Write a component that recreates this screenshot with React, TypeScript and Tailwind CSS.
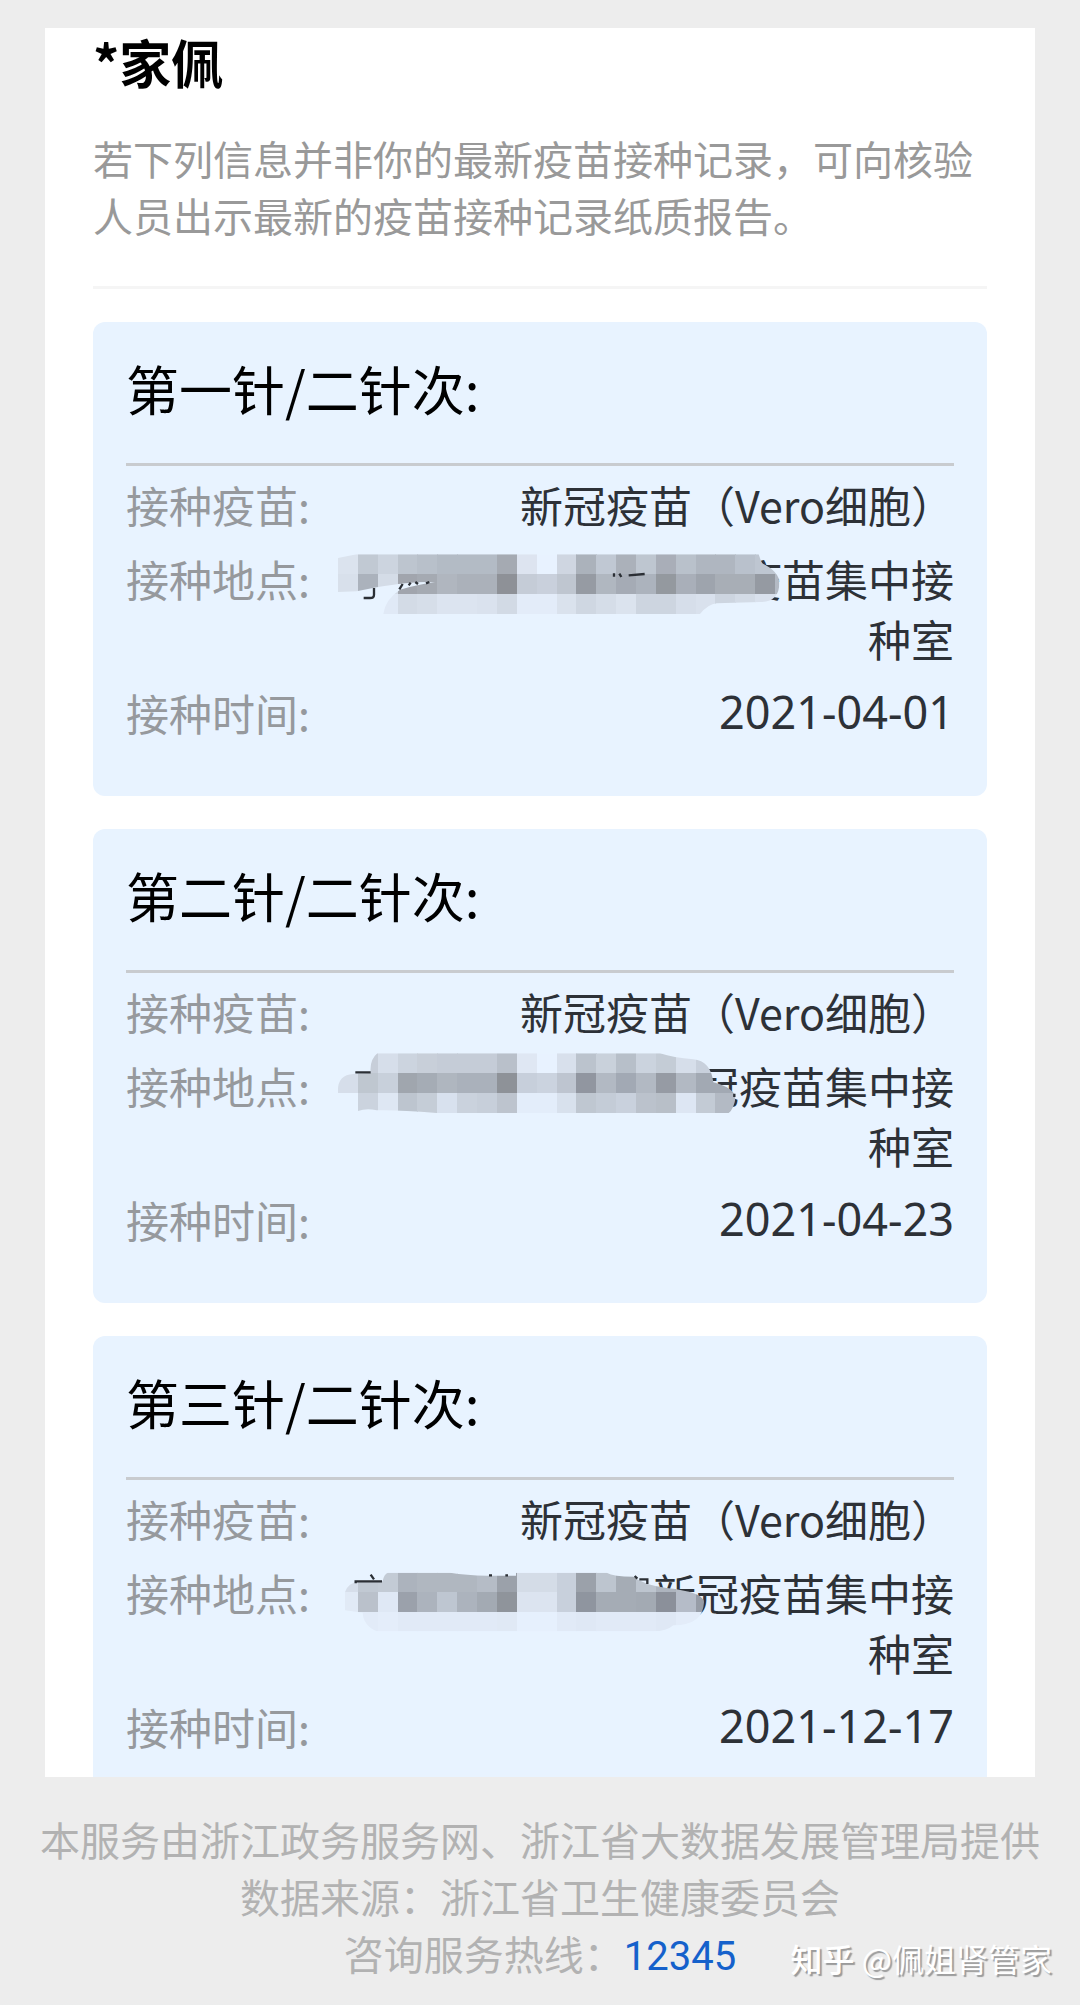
import React from 'react';

type Mosaic = {
  id: string;
  outline: string;
  rows: { y: number; cells: string[] }[];
  marks: string;
};

type Dose = {
  title: string;
  vaccine: string;
  place: string;
  date: string;
  mosaic: Mosaic;
};

const CELL = 59.6;

const firstMosaic: Mosaic = {
  id: 'mosaic-1',
  outline:
    'M54 90 L110 79 H1316 L1325 105 Q1378 130 1378 165 Q1378 222 1320 222 L1190 226 Q1165 228 1140 258 H190 Q195 215 240 185 Q300 168 345 163 Q290 158 170 178 L110 190 L54 192 Z',
  rows: [
    {
      y: 79,
      cells: ['#dbe3ee', '#c1c9d3', '#ccd4df', '#bdc5cf', '#b8c0ca', '#b3bbc5', '#b3bbc5', '#b3bbc5', '#a5aab2', '#dde4f0', '#e8f2ff', '#cfd6e1', '#abb2bb', '#c0c8d3', '#abb1ba', '#bec6d0', '#a9aeb8', '#b9c1cb', '#afb6c0', '#afb6c0', '#b9c1cc', '#bec6d1', '#bec6d1'],
    },
    {
      y: 139,
      cells: ['#d8e0eb', '#abb2bc', '#d4dce7', '#a1a5ad', '#a5aab2', '#b0b6bf', '#abb1ba', '#abb1ba', '#8e9197', '#c5ccd7', '#c9d0dc', '#bfc6d0', '#969ba3', '#b0b7c0', '#a5abb5', '#acb3bd', '#94999f', '#a9afb9', '#9ea4ad', '#a8aeb6', '#a8aeb6', '#959aa2', '#b3bac4'],
    },
    {
      y: 198,
      cells: ['#e5effc', '#e5effc', '#e0e9f6', '#d3dbe6', '#d6dee9', '#dce4f0', '#dce4f0', '#dae2ee', '#d2dae5', '#e3ecf9', '#e3ecf9', '#dae2ed', '#cfd7e2', '#d5dde8', '#dbe3ee', '#cdd5e0', '#cdd5e0', '#d6deea', '#d9e1ed', '#cdd5e0', '#d3dbe6', '#d9e1ed', '#d9e1ed'],
    },
  ],
  marks: 'M162 180 V200 Q162 210 150 210 H131 M238 184 L248 168 M266 172 L272 164 M286 162 L294 168 M318 166 L328 162 M882 136 V146 M898 137 L904 147 M926 142 L974 138',
};

const secondMosaic: Mosaic = {
  id: 'mosaic-2',
  outline:
    'M54 174 Q50 120 100 117 L152 114 Q148 75 172 55 H1020 Q1060 68 1120 73 Q1172 78 1180 142 Q1246 160 1246 190 Q1242 222 1226 234 H350 Q230 224 170 226 Q140 218 114 228 V174 Z',
  rows: [
    {
      y: 55,
      cells: ['#e5effc', '#c7ced9', '#d6deea', '#ccd4df', '#c8cfd9', '#c5ccd7', '#c5ccd7', '#c5ccd7', '#b9c0ca', '#dfe7f3', '#e8f2ff', '#d8e0ec', '#bbc3cd', '#c9d1db', '#b7bfc9', '#cbd3de', '#c4ccd6', '#d6deea', '#c8d0dc', '#c8d0dc', '#c8d0dc'],
    },
    {
      y: 114,
      cells: ['#d6deea', '#bfc7d0', '#c8d0db', '#a0a6ae', '#a5acb5', '#afb6bf', '#aab1bb', '#aab1bb', '#8e9298', '#c7cfdb', '#cbd3df', '#bec5d0', '#9196a0', '#b2b9c3', '#a2a9b4', '#b2b9c3', '#969ba4', '#b2b9c3', '#a2a9b3', '#a2a9b3', '#a9b0ba'],
    },
    {
      y: 174,
      cells: ['#e5effc', '#cbd3de', '#dee7f3', '#bdc5cf', '#c5cdd7', '#d8e1ee', '#cad2dd', '#c7cfda', '#bdc4ce', '#e3edfa', '#e3edfa', '#d8e1ed', '#bfc7d1', '#c4ccd7', '#c9d1dd', '#bbc2cc', '#b8bfc8', '#dde6f3', '#c3cbd5', '#b3bac4', '#b3bac4'],
    },
  ],
  marks: 'M106 112 H152 M1243 176 V186',
};

const thirdMosaic: Mosaic = {
  id: 'mosaic-3',
  outline:
    'M75 205 V150 Q85 122 115 120 L188 118 Q192 95 204 92 H390 Q440 100 500 101 H588 V92 H860 Q880 104 940 104 Q970 128 1040 138 Q1150 150 1152 180 Q1150 250 1060 250 Q1040 268 1000 268 H170 Q130 250 128 212 Z',
  rows: [
    {
      y: 91,
      cells: ['#d6deea', '#c1c9d3', '#c3cbd5', '#acb3bd', '#b0b7c0', '#b0b7c0', '#b0b7c0', '#b5bcc6', '#9ba1aa', '#d4dce7', '#d4dce7', '#c8d0dc', '#9ba1aa', '#bdc5cf', '#a5acb5', '#bdc5cf', '#adb4be', '#b5bcc6', '#adb4be'],
    },
    {
      y: 150,
      cells: ['#e1eaf6', '#bac1cb', '#dfe8f5', '#9ba1ab', '#acb3bd', '#bec6d1', '#acb3bd', '#a3aab3', '#8f949b', '#dce4f0', '#dce4f0', '#c8d0dc', '#8f959f', '#a5acb5', '#a5acb5', '#a3aab3', '#8b909a', '#b5bcc8', '#979da7'],
    },
    {
      y: 210,
      cells: ['#e5effc', '#e2ebf8', '#e4edfa', '#e1eaf7', '#e1eaf7', '#e1eaf7', '#e1eaf7', '#e1eaf7', '#e0e9f5', '#e6f0fd', '#e6f0fd', '#e1eaf7', '#dfe8f5', '#e1eaf7', '#e1eaf7', '#e1eaf7', '#dfe8f5', '#e3ecf9', '#e3ecf9'],
    },
  ],
  marks: 'M107 124 V118 H186 M152 98 L162 112 M507 100 H516 M556 100 H564 M944 102 L952 110 M958 112 H982 V126',
};

const doses: Dose[] = [
  { title: '第一针/二针次:', vaccine: '新冠疫苗（Vero细胞）', place: '新冠疫苗集中接种室', date: '2021-04-01', mosaic: firstMosaic },
  { title: '第二针/二针次:', vaccine: '新冠疫苗（Vero细胞）', place: '新冠疫苗集中接种室', date: '2021-04-23', mosaic: secondMosaic },
  { title: '第三针/二针次:', vaccine: '新冠疫苗（Vero细胞）', place: '新冠疫苗集中接种室', date: '2021-12-17', mosaic: thirdMosaic },
];

/* Pixelated smear that hides the first part of a place name. */
function MosaicPatch({ mosaic }: { mosaic: Mosaic }) {
  return (
    <span className="relative inline-block h-[60px] w-[301px] align-top">
      <svg
        className="absolute -top-5 -left-8 z-10 h-[100px] w-[480px] max-w-none"
        viewBox="0 0 1440 300"
        aria-hidden="true"
      >
        <clipPath id={mosaic.id}>
          <path d={mosaic.outline} />
        </clipPath>
        <g clipPath={`url(#${mosaic.id})`} shapeRendering="crispEdges">
          {mosaic.rows.map((row) =>
            row.cells.map((color, i) => (
              <rect key={`${row.y}-${i}`} x={54 + i * CELL} y={row.y} width={CELL + 1} height={60} fill={color} />
            )),
          )}
        </g>
        <path d={mosaic.marks} fill="none" stroke="#2b2f35" strokeWidth="7" />
      </svg>
    </span>
  );
}

function Row({ label, children }: { label: string; children: React.ReactNode }) {
  return (
    <div className="flex justify-between gap-5">
      <dt className="shrink-0 text-[#96999d]">{label}</dt>
      <dd className="text-right text-[#2d3137]">{children}</dd>
    </div>
  );
}

function DoseCard({ dose }: { dose: Dose }) {
  return (
    <section className="rounded-xl bg-[#e8f3ff] px-[33px] pt-[30px] pb-[54px]">
      <h2 className="border-b-[3px] border-[#c8cbcf] pb-[39px] text-[53px] leading-[72px] text-black">{dose.title}</h2>
      <dl className="flex flex-col gap-[14px] pt-2 text-[43px] leading-[60px]">
        <Row label="接种疫苗:">{dose.vaccine}</Row>
        <Row label="接种地点:">
          <MosaicPatch mosaic={dose.mosaic} />
          {dose.place}
        </Row>
        <Row label="接种时间:">
          <time
            dateTime={dose.date}
            className="block font-['Noto_Sans','Noto_Sans_CJK_SC',sans-serif] text-[45px] leading-[60px]"
          >
            {dose.date}
          </time>
        </Row>
      </dl>
    </section>
  );
}

export default function App() {
  return (
    <div className="relative flex h-screen flex-col bg-[#ededed] pt-7 font-['Noto_Sans_CJK_SC',sans-serif]" lang="zh-CN">
      <main className="mx-[45px] flex min-h-0 flex-1 flex-col bg-white px-12">
        <header className="shrink-0 border-b-[3px] border-[#f5f5f5] pb-[42px]">
          <h1 className="text-[52px] leading-[68px] font-bold text-black">*家佩</h1>
          <p className="mt-[34px] text-[40px] leading-[57px] text-[#999999]">
            若下列信息并非你的最新疫苗接种记录，可向核验人员出示最新的疫苗接种记录纸质报告。
          </p>
        </header>
        <div className="min-h-0 flex-1 overflow-hidden">
          <div className="flex flex-col gap-[33px] py-[33px]">
            {doses.map((dose) => (
              <DoseCard key={dose.date} dose={dose} />
            ))}
          </div>
        </div>
      </main>
      <footer className="shrink-0 pt-[34px] pb-5 text-center text-[40px] leading-[57px] text-[#b2b2b2]">
        <p>本服务由浙江政务服务网、浙江省大数据发展管理局提供</p>
        <p>数据来源：浙江省卫生健康委员会</p>
        <p>
          咨询服务热线：
          <a href="tel:12345" className="font-['Roboto',sans-serif] text-[#1561cb]">
            12345
          </a>
        </p>
      </footer>
      <p className="absolute right-7 bottom-[26px] text-[32px] leading-[42px] text-white [text-shadow:2px_2px_1px_#9a9a9a]">
        <span className="font-medium">知乎</span> @佩姐肾管家
      </p>
    </div>
  );
}
